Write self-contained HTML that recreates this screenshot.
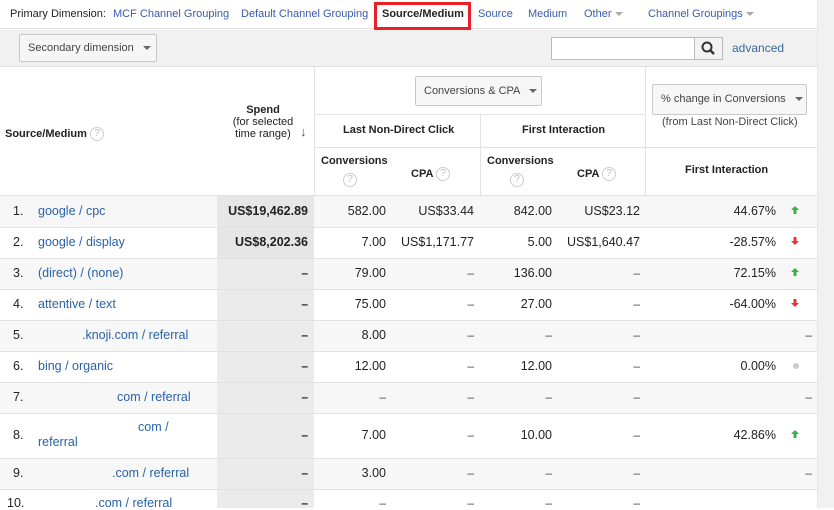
<!DOCTYPE html>
<html><head><style>
*{margin:0;padding:0;box-sizing:border-box}
body{width:834px;height:508px;overflow:hidden;background:#fff;font-family:"Liberation Sans",Arial,sans-serif;font-size:12px;color:#222;position:relative}
.a{position:absolute;white-space:nowrap}
.lk{color:#3a5ab0}
.b{font-weight:bold;font-size:11px}
.q{display:inline-block;width:14px;height:14px;border:1px solid #ccc;border-radius:50%;color:#bbb;font-size:10px;text-align:center;line-height:12px;font-weight:normal;vertical-align:middle}
.hl{position:absolute;background:#e2e2e2;height:1px}
.vl{position:absolute;background:#e2e2e2;width:1px}
.btn{position:absolute;border:1px solid #c9c9c9;border-radius:2px;background:#f6f6f6;color:#444;font-size:11px;padding-left:8px}
.tri{display:inline-block;width:0;height:0;border-left:4px solid transparent;border-right:4px solid transparent;border-top:4px solid #666;vertical-align:middle}
.r{position:absolute;left:0;width:817px}
.n{position:absolute;text-align:right;white-space:nowrap}
.w{position:absolute;left:0;top:0;width:834px;height:508px}
</style></head><body>
<div class="a" style="left:0;top:0;width:817px;height:29px;border-bottom:1px solid #e0e0e0"></div>
<div class="a" style="left:10px;top:8px;font-size:11px">Primary Dimension:</div>
<div class="a lk" style="left:113px;top:8px;font-size:11px">MCF Channel Grouping</div>
<div class="a lk" style="left:241px;top:8px;font-size:11px">Default Channel Grouping</div>
<div class="a" style="left:374px;top:2px;width:97px;height:28px;border:3px solid #e8202a"></div>
<div class="a" style="left:382px;top:8px;font-size:11px;font-weight:bold">Source/Medium</div>
<div class="a lk" style="left:478px;top:8px;font-size:11px">Source</div>
<div class="a lk" style="left:528px;top:8px;font-size:11px">Medium</div>
<div class="a lk" style="left:584px;top:8px;font-size:11px">Other <span class="tri" style="border-top-color:#aaa"></span></div>
<div class="a lk" style="left:648px;top:8px;font-size:11px">Channel Groupings <span class="tri" style="border-top-color:#aaa"></span></div>
<div class="a" style="left:0;top:30px;width:817px;height:37px;background:#f1f1f1;border-bottom:1px solid #e0e0e0"></div>
<div class="btn" style="left:19px;top:34px;width:138px;height:28px;line-height:26px">Secondary dimension &nbsp;&nbsp;<span class="tri"></span></div>
<div class="a" style="left:551px;top:37px;width:144px;height:23px;border:1px solid #bbb;background:#fff"></div>
<div class="a" style="left:694px;top:37px;width:29px;height:23px;border:1px solid #bbb;background:#f3f3f3"><svg width="27" height="21" viewBox="0 0 27 21"><circle cx="12" cy="9" r="4.5" fill="none" stroke="#333" stroke-width="2"/><line x1="15" y1="12" x2="19" y2="16" stroke="#333" stroke-width="2.5"/></svg></div>
<div class="a lk" style="left:732px;top:41px;font-size:12px;color:#3a6a9a">advanced</div>
<div class="a" style="left:817px;top:0;width:17px;height:508px;background:#f1f1f1;border-left:1px solid #e6e6e6"></div>
<div class="vl" style="left:314px;top:67px;height:129px"></div>
<div class="vl" style="left:645px;top:67px;height:129px"></div>
<div class="vl" style="left:480px;top:115px;height:81px"></div>
<div class="hl" style="left:314px;top:114px;width:331px"></div>
<div class="hl" style="left:314px;top:147px;width:503px"></div>
<div class="hl" style="left:0;top:195px;width:817px"></div>
<div class="a b" style="left:5px;top:127px">Source/Medium <span class="q">?</span></div>
<div class="a" style="left:218px;top:104px;width:90px;text-align:center;font-size:11px;line-height:12px"><b>Spend</b><br>(for selected<br>time range)</div>
<div class="a" style="left:300px;top:124px;font-size:13px;color:#555">↓</div>
<div class="btn" style="left:415px;top:76px;width:127px;height:30px;line-height:28px">Conversions &amp; CPA &nbsp;&nbsp;<span class="tri"></span></div>
<div class="btn" style="left:652px;top:84px;width:155px;height:31px;line-height:29px">% change in Conversions &nbsp;&nbsp;<span class="tri"></span></div>
<div class="a" style="left:662px;top:116px;font-size:11px;color:#444">(from Last Non-Direct Click)</div>
<div class="a b" style="left:343px;top:124px">Last Non-Direct Click</div>
<div class="a b" style="left:522px;top:124px">First Interaction</div>
<div class="a b" style="left:321px;top:155px">Conversions</div>
<div class="a" style="left:343px;top:172px"><span class="q">?</span></div>
<div class="a b" style="left:411px;top:167px">CPA <span class="q">?</span></div>
<div class="a b" style="left:487px;top:155px">Conversions</div>
<div class="a" style="left:510px;top:172px"><span class="q">?</span></div>
<div class="a b" style="left:577px;top:167px">CPA <span class="q">?</span></div>
<div class="a b" style="left:685px;top:164px">First Interaction</div>
<div class="r" style="top:196px;height:31px;background:#f7f7f7"></div>
<div class="r" style="top:258px;height:31px;background:#f7f7f7"></div>
<div class="r" style="top:320px;height:31px;background:#f7f7f7"></div>
<div class="r" style="top:382px;height:31px;background:#f7f7f7"></div>
<div class="r" style="top:458px;height:31px;background:#f7f7f7"></div>
<div class="a" style="left:217px;top:196px;width:97px;height:312px;background:#ebebeb"></div>
<div class="a" style="left:217px;top:196px;width:97px;height:62px;background:#e6e6e6"></div>
<div class="hl" style="left:0;top:227px;width:817px"></div>
<div class="hl" style="left:0;top:258px;width:817px"></div>
<div class="hl" style="left:0;top:289px;width:817px"></div>
<div class="hl" style="left:0;top:320px;width:817px"></div>
<div class="hl" style="left:0;top:351px;width:817px"></div>
<div class="hl" style="left:0;top:382px;width:817px"></div>
<div class="hl" style="left:0;top:413px;width:817px"></div>
<div class="hl" style="left:0;top:458px;width:817px"></div>
<div class="hl" style="left:0;top:489px;width:817px"></div>
<div class="w" style="font-size:12.5px">
<div class="a" style="left:13px;top:204px">1.</div><div class="a" style="left:38px;top:204px;color:#2a62a8">google / cpc</div>
<div class="a" style="left:13px;top:235px">2.</div><div class="a" style="left:38px;top:235px;color:#2a62a8">google / display</div>
<div class="a" style="left:13px;top:266px">3.</div><div class="a" style="left:38px;top:266px;color:#2a62a8">(direct) / (none)</div>
<div class="a" style="left:13px;top:297px">4.</div><div class="a" style="left:38px;top:297px;color:#2a62a8">attentive / text</div>
<div class="a" style="left:13px;top:328px">5.</div><div class="a" style="left:82px;top:328px;color:#2a62a8">.knoji.com / referral</div>
<div class="a" style="left:13px;top:359px">6.</div><div class="a" style="left:38px;top:359px;color:#2a62a8">bing / organic</div>
<div class="a" style="left:13px;top:390px">7.</div><div class="a" style="left:117px;top:390px;color:#2a62a8">com / referral</div>
<div class="a" style="left:13px;top:428px">8.</div><div class="a" style="left:138px;top:420px;color:#2a62a8">com /</div><div class="a" style="left:38px;top:435px;color:#2a62a8">referral</div>
<div class="a" style="left:13px;top:466px">9.</div><div class="a" style="left:112px;top:466px;color:#2a62a8">.com / referral</div>
<div class="a" style="left:7px;top:496px">10.</div><div class="a" style="left:95px;top:496px;color:#2a62a8">.com / referral</div>
<div class="n b" style="right:526px;top:204px;font-size:12.5px">US$19,462.89</div>
<div class="n b" style="right:526px;top:235px;font-size:12.5px">US$8,202.36</div>
<div class="n" style="right:448px;top:204px">582.00</div><div class="n" style="right:360px;top:204px">US$33.44</div><div class="n" style="right:282px;top:204px">842.00</div><div class="n" style="right:194px;top:204px">US$23.12</div><div class="n" style="right:58px;top:204px">44.67%</div>
<div class="n" style="right:448px;top:235px">7.00</div><div class="n" style="right:360px;top:235px">US$1,171.77</div><div class="n" style="right:282px;top:235px">5.00</div><div class="n" style="right:194px;top:235px">US$1,640.47</div><div class="n" style="right:58px;top:235px">-28.57%</div>
<div class="n" style="right:448px;top:266px">79.00</div><div class="n" style="right:282px;top:266px">136.00</div><div class="n" style="right:58px;top:266px">72.15%</div>
<div class="n" style="right:448px;top:297px">75.00</div><div class="n" style="right:282px;top:297px">27.00</div><div class="n" style="right:58px;top:297px">-64.00%</div>
<div class="n" style="right:448px;top:328px">8.00</div>
<div class="n" style="right:448px;top:359px">12.00</div><div class="n" style="right:282px;top:359px">12.00</div><div class="n" style="right:58px;top:359px">0.00%</div>
<div class="n" style="right:448px;top:428px">7.00</div><div class="n" style="right:282px;top:428px">10.00</div><div class="n" style="right:58px;top:428px">42.86%</div>
<div class="n" style="right:448px;top:466px">3.00</div>
</div>
<div class="w" style="font-weight:bold;font-size:12px">
<div class="n" style="right:526px;top:266px">–</div><div class="n" style="right:526px;top:297px">–</div><div class="n" style="right:526px;top:328px">–</div><div class="n" style="right:526px;top:359px">–</div><div class="n" style="right:526px;top:390px">–</div><div class="n" style="right:526px;top:428px">–</div><div class="n" style="right:526px;top:466px">–</div><div class="n" style="right:526px;top:496px">–</div>
</div>
<div class="w" style="color:#444">
<div class="n" style="right:360px;top:266px">–</div><div class="n" style="right:194px;top:266px">–</div>
<div class="n" style="right:360px;top:297px">–</div><div class="n" style="right:194px;top:297px">–</div>
<div class="n" style="right:360px;top:328px">–</div><div class="n" style="right:282px;top:328px">–</div><div class="n" style="right:194px;top:328px">–</div><div class="n" style="right:22px;top:328px">–</div>
<div class="n" style="right:360px;top:359px">–</div><div class="n" style="right:194px;top:359px">–</div>
<div class="n" style="right:448px;top:390px">–</div><div class="n" style="right:360px;top:390px">–</div><div class="n" style="right:282px;top:390px">–</div><div class="n" style="right:194px;top:390px">–</div><div class="n" style="right:22px;top:390px">–</div>
<div class="n" style="right:360px;top:428px">–</div><div class="n" style="right:194px;top:428px">–</div>
<div class="n" style="right:360px;top:466px">–</div><div class="n" style="right:282px;top:466px">–</div><div class="n" style="right:194px;top:466px">–</div><div class="n" style="right:22px;top:466px">–</div>
<div class="n" style="right:448px;top:496px">–</div><div class="n" style="right:360px;top:496px">–</div><div class="n" style="right:282px;top:496px">–</div><div class="n" style="right:194px;top:496px">–</div>
</div>
<svg class="a" style="left:790px;top:205px" width="10" height="10"><path d="M5 1 L9 5 H6.5 V9 H3.5 V5 H1Z" fill="#3cae4a"/></svg>
<svg class="a" style="left:790px;top:236px" width="10" height="10"><path d="M5 9 L9 5 H6.5 V1 H3.5 V5 H1Z" fill="#e8333a"/></svg>
<svg class="a" style="left:790px;top:267px" width="10" height="10"><path d="M5 1 L9 5 H6.5 V9 H3.5 V5 H1Z" fill="#3cae4a"/></svg>
<svg class="a" style="left:790px;top:298px" width="10" height="10"><path d="M5 9 L9 5 H6.5 V1 H3.5 V5 H1Z" fill="#e8333a"/></svg>
<svg class="a" style="left:792px;top:362px" width="8" height="8"><circle cx="4" cy="4" r="3" fill="#ccc"/></svg>
<svg class="a" style="left:790px;top:429px" width="10" height="10"><path d="M5 1 L9 5 H6.5 V9 H3.5 V5 H1Z" fill="#3cae4a"/></svg>
</body></html>
